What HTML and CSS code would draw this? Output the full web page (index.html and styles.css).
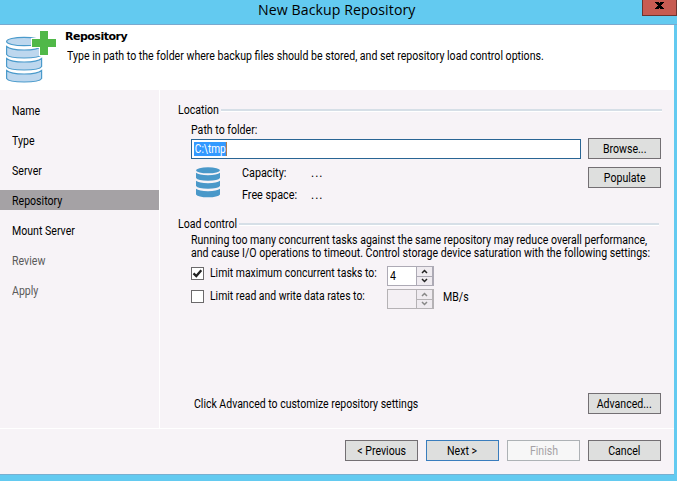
FILE: index.html
```html
<!DOCTYPE html>
<html lang="en">
<head>
<meta charset="utf-8">
<title>New Backup Repository</title>
<link rel="stylesheet" href="styles.css">
</head>
<body>
<div class="window">
  <div class="titlebar">
    <h1><span class="t">New Backup Repository</span></h1>
    <button class="close" aria-label="Close"><svg width="9" height="7" viewBox="0 0 9 7" shape-rendering="crispEdges"><path d="M0 0h4v1h1V0h4v1H8v1H7v1H6v1h1v1h1v1h1v1H5V6H4v1H0V6h1V5h1V4h1V3H2V2H1V1H0z" fill="#000"/></svg></button>
  </div>
  <header class="banner">
    <svg class="logo" width="52" height="54" viewBox="0 0 52 54">
      <g fill="#bdd7ee" stroke="#4a9acb" stroke-width="1.2">
        <path d="M1.6 39.500q4 3.500 17.500 3.500t17.500-3.500v8q-2 3.500-17.500 3.500t-17.500-3.500z"/>
        <path d="M1.6 27.500q4 3.500 17.500 3.500t17.500-3.500v8q-2 3.500-17.500 3.500t-17.500-3.500z"/>
        <path d="M1.6 15.500q4 3.500 17.500 3.500t17.500-3.500v8q-2 3.500-17.500 3.500t-17.500-3.500z"/>
        <ellipse cx="19" cy="10.5" rx="17.4" ry="4.2"/>
      </g>
      <path d="M34 -1h10v7h9v10h-9v9H34v-8h-8V7h8z" fill="#fff"/>
      <path d="M35 0h8v8h8v8h-8v8h-8v-8h-8V8h8z" fill="#50b848"/>
    </svg>
    <div class="banner-text">
      <h2>Repository</h2>
      <p><span class="t">Type in path to the folder where backup files should be stored, and set repository load control options.</span></p>
    </div>
  </header>
  <div class="body">
    <nav class="steps">
      <div class="step"><span class="t">Name</span></div>
      <div class="step"><span class="t">Type</span></div>
      <div class="step"><span class="t">Server</span></div>
      <div class="step current"><span class="t">Repository</span></div>
      <div class="step"><span class="t">Mount Server</span></div>
      <div class="step pending"><span class="t">Review</span></div>
      <div class="step pending"><span class="t">Apply</span></div>
    </nav>
    <main class="page">
      <section class="location">
        <div class="legend location-legend"><span class="t">Location</span></div>
        <div class="columns">
          <div class="fields">
            <label class="path-label"><span class="t">Path to folder:</span></label>
            <div class="path"><span class="selected t">C:\tmp</span></div>
            <div class="volume">
              <svg width="26" height="31" viewBox="0 0 26 31" fill="#4a98c9">
                <ellipse cx="13" cy="3.3" rx="12" ry="3"/>
                <path d="M1 5.8q3 2.4 12 2.4t12-2.4v5.2q-2 2.8-12 2.8T1 11z"/>
                <path d="M1 13.8q3 2.4 12 2.4t12-2.4v5.2q-2 2.8-12 2.8T1 19z"/>
                <path d="M1 21.8q3 2.4 12 2.4t12-2.4v5.6q-2 2.8-12 2.8T1 27.400z"/>
              </svg>
              <dl>
                <dt><span class="t">Capacity:</span></dt><dd>...</dd>
                <dt><span class="t">Free space:</span></dt><dd>...</dd>
              </dl>
            </div>
          </div>
          <div class="actions">
            <button class="btn"><span class="t">Browse...</span></button>
            <button class="btn"><span class="t">Populate</span></button>
          </div>
        </div>
      </section>
      <section class="load">
        <div class="legend load-legend"><span class="t">Load control</span></div>
        <p class="hint"><span class="t">Running too many concurrent tasks against the same repository may reduce overall performance,</span><br><span class="t">and cause I/O operations to timeout. Control storage device saturation with the following settings:</span></p>
        <div class="limit">
          <span class="check"><svg width="11" height="11" viewBox="0 0 11 11"><path d="M1.500 5.300 4.300 8 9.300 2.300" fill="none" stroke="#222" stroke-width="2.300"/></svg></span>
          <label><span class="t">Limit maximum concurrent tasks to:</span></label>
          <div class="spinner"><span class="value"><span class="t">4</span></span><span class="arrows"><i><svg width="7" height="5" viewBox="0 0 7 5"><path d="M1 4 3.500 1.500 6 4"/></svg></i><i><svg width="7" height="5" viewBox="0 0 7 5"><path d="M1 1 3.500 3.500 6 1"/></svg></i></span></div>
        </div>
        <div class="limit">
          <span class="check"></span>
          <label><span class="t">Limit read and write data rates to:</span></label>
          <div class="spinner off"><span class="value"></span><span class="arrows"><i><svg width="7" height="5" viewBox="0 0 7 5"><path d="M1 4 3.500 1.500 6 4"/></svg></i><i><svg width="7" height="5" viewBox="0 0 7 5"><path d="M1 1 3.500 3.500 6 1"/></svg></i></span></div>
          <span class="unit"><span class="t">MB/s</span></span>
        </div>
      </section>
      <div class="advanced">
        <span class="t">Click Advanced to customize repository settings</span>
        <button class="btn"><span class="t">Advanced...</span></button>
      </div>
    </main>
  </div>
  <footer class="footer">
    <button class="btn"><span class="t">&lt; Previous</span></button>
    <button class="btn default"><span class="t">Next &gt;</span></button>
    <button class="btn" disabled><span class="t">Finish</span></button>
    <button class="btn"><span class="t">Cancel</span></button>
  </footer>
</div>
</body>
</html>
```
FILE: styles.css
```css
* { box-sizing: border-box; margin: 0; padding: 0; }
body {
  width: 677px; height: 481px; overflow: hidden;
  background: #63caf0; color: #000;
  font: 12px/14px Roboto, "Liberation Sans", sans-serif;
  white-space: nowrap;
}
/* condensed dialog face */
.t { display: inline-block; transform: scaleX(.882); transform-origin: left center; }
.window { width: 674px; height: 475px; display: flex; flex-direction: column; border-bottom: 1px solid #79afd0; }
.titlebar { flex: none; width: 677px; height: 25px; display: flex; border-bottom: 1px solid #79a9cf; }
.titlebar h1 { flex: 1; padding-left: 258px; font: 15px/19px "Open Sans", "Noto Sans", sans-serif; letter-spacing: .1px; }
.titlebar .t { transform: scaleX(.94); }
.close { width: 35px; height: 16px; display: flex; align-items: center; justify-content: center; background: #c75b52; border: 1px solid #6d342f; border-top: 0; padding-bottom: 5px; }
.logo { margin: 6px 0 0 5px; }
.banner { flex: none; height: 65px; display: flex; background: #fff; }
.banner-text { padding: 5px 0 0 8px; }
.banner h2 { font: bold 11px/14px "DejaVu Sans", sans-serif; letter-spacing: -.5px; }
.banner p { margin: 5px 0 0 2px; }
.body { flex: none; height: 338px; display: flex; background: #f7f3f7; }
.steps { flex: none; width: 160px; padding-top: 10px; border-right: 1px solid #fff; display: flex; flex-direction: column; gap: 10px; }
.step { height: 20px; line-height: 14px; padding: 4px 0 0 12px; }
.current { background: #a5a2a5; }
.pending { color: #5a5a5a; }
.page { flex: 1; min-width: 0; padding: 13px 12px 0 18px; display: flex; flex-direction: column; }
.legend { height: 14px; display: flex; align-items: center; }
.legend .t { width: 43px; }
.load-legend .t { width: 61px; }
.legend::after { content: ""; flex: 1; height: 2px; background: #d6dfe7; border-bottom: 1px solid #fff; }
.load-legend { margin-right: 3px; }
.location { height: 114px; }
.load { height: 176px; }
.columns { display: flex; gap: 7px; padding: 0 1px 0 13px; }
.fields { width: 390px; }
.path-label { display: block; height: 14px; margin: 6px 0 2px; }
.path { height: 20px; padding: 2px; background: #fff; border: 1px solid #296594; }
.selected { height: 14px; line-height: 15px; background: #3399ff; color: #fff; border-right: 1px solid #c66d18; padding-left: 1px; }
.path .selected { transform: scaleX(.84); }
.volume { display: flex; padding: 8px 0 0 4px; }
dl { display: grid; grid-template-columns: 70px 20px; grid-auto-rows: 22px; margin: -1px 0 0 21px; }
dd { letter-spacing: 1px; margin-left: -1px; }
dt .t { transform: scaleX(.9); }
.actions { padding-top: 21px; display: flex; flex-direction: column; gap: 8px; }
.btn { width: 73px; height: 21px; flex: none; background: #dedfde; border: 1px solid #736f73; color: #000; font: inherit; line-height: 14px; text-align: center; padding-top: 1px; }
.btn .t { transform-origin: center; }
.btn.default { border-color: #397dbd; }
.btn:disabled { background: #f7f7f7; border-color: #adb2b5; color: #a5a2a5; }
.hint { line-height: 13px; padding-left: 13px; margin: 3px 0 6px; }
.hint .t { margin-right: -62px; }
.limit { display: flex; height: 20px; margin: 0 0 3px 13px; }
.check { width: 13px; height: 13px; margin: 1px 6px 0 0; background: #fff; border: 1px solid #6b696b; display: flex; }
.limit label { width: 177px; }
.limit label .t { transform: scaleX(.867); }
.spinner { width: 47px; height: 20px; display: flex; background: #fff; border: 1px solid #adaab5; }
.value { flex: 1; padding: 2px 0 0 2px; }
.arrows { width: 17px; display: flex; flex-direction: column; background: #adaab5; padding: 0 1px 0 1px; gap: 1px; }
.arrows i { flex: 1; background: #efebf0; display: flex; align-items: center; justify-content: center; }
.arrows path { fill: none; stroke: #222; stroke-width: 1.500; }
.off { background: #f4f0f4; border-color: #b5b2b5; }
.off .arrows { background: #b5b2b5; }
.off .arrows path { stroke: #888; }
.unit { padding: 1px 0 0 9px; }
.advanced { display: flex; justify-content: space-between; align-items: center; padding: 0 1px 0 16px; }
.advanced > .t { transform: scaleX(.875); }
.footer { flex: 1; background: #f7f3f7; border-top: 1px solid #fff; display: flex; justify-content: flex-end; gap: 8px; padding: 11px 13px 0 0; }
```
